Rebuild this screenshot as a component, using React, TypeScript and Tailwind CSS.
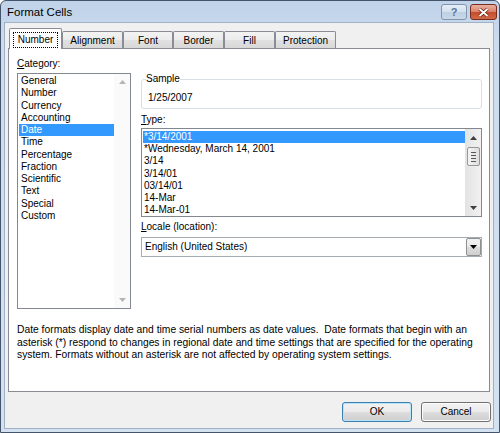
import React from 'react';

const categories = [
    'General',
    'Number',
    'Currency',
    'Accounting',
    'Date',
    'Time',
    'Percentage',
    'Fraction',
    'Scientific',
    'Text',
    'Special',
    'Custom',
];

const types = [
    '*3/14/2001',
    '*Wednesday, March 14, 2001',
    '3/14',
    '3/14/01',
    '03/14/01',
    '14-Mar',
    '14-Mar-01',
];

const tabs = [
    { name: 'Number', width: 'w-[53px]' },
    { name: 'Alignment', width: 'w-[61px]' },
    { name: 'Font', width: 'w-[50px]' },
    { name: 'Border', width: 'w-[51px]' },
    { name: 'Fill', width: 'w-[51px]' },
    { name: 'Protection', width: 'w-[61px]' },
];

function Arrow({ dir, color }: { dir: 'up' | 'down'; color: string }) {
    return (
        <svg width="7" height="4" viewBox="0 0 7 4">
            <path d={dir === 'up' ? 'M0 4 L3.5 0 L7 4 Z' : 'M0 0 L7 0 L3.5 4 Z'} fill={color} />
        </svg>
    );
}

function TitleBar() {
    return (
        <div className="h-[21px] flex items-start justify-between">
            <span className="pl-[6px] pt-[5px] text-[11.5px] leading-[12px] text-black">Format Cells</span>
            <div className="flex gap-[3px] pt-[3px] pr-[2px]">
                {/* HELP */}
                <div className="w-[26px] h-[16px] rounded-[3px] border border-[#7f95ae] bg-[linear-gradient(#e6eef7_0%,#d3e0ee_50%,#bccfe4_50%,#c9d9ea_100%)] flex items-center justify-center">
                    <span className="text-[11px] leading-[11px] font-bold text-[#5a7597]">?</span>
                </div>
                {/* CLOSE */}
                <div className="w-[27px] h-[16px] rounded-[3px] border border-[#7a2b1b] bg-[linear-gradient(#eab0a1_0%,#d9826c_50%,#c64a2a_50%,#d16a45_100%)] flex items-center justify-center">
                    <svg width="11" height="9" viewBox="0 0 11 9">
                        <path d="M1.5 1 L9.5 8 M9.5 1 L1.5 8" stroke="#6b2215" strokeWidth="3.4" />
                        <path d="M1.5 1 L9.5 8 M9.5 1 L1.5 8" stroke="#ffffff" strokeWidth="1.8" />
                    </svg>
                </div>
            </div>
        </div>
    );
}

function Tabs() {
    return (
        <div className="flex items-end pl-[4px] mt-[5px] relative z-10">
            {tabs.map((tab, idx) =>
                idx === 0 ? (
                    <div
                        key={tab.name}
                        className={`${tab.width} h-[21px] -mb-px bg-white border border-b-0 border-[#898c95] rounded-t-[2px] flex justify-center pt-[3px]`}
                    >
                        <span className="h-[16px] px-[4px] border border-dotted border-black leading-[14px]">
                            {tab.name}
                        </span>
                    </div>
                ) : (
                    <div
                        key={tab.name}
                        className={`${tab.width} h-[17px] border border-b-0 border-[#898c95] rounded-t-[2px] bg-[linear-gradient(#f3f3f3_0%,#ebebeb_50%,#e1e1e1_50%,#d8d8d8_100%)] flex justify-center pt-[3px] leading-[12px]`}
                    >
                        {tab.name}
                    </div>
                )
            )}
        </div>
    );
}

function CategoryList() {
    return (
        <div className="h-[236px] border border-[#828790] bg-white flex">
            <div className="flex-1 pt-[1px]">
                {categories.map((c) => (
                    <div
                        key={c}
                        className={`h-[12.25px] leading-[12.25px] ml-[1px] pl-[2px] ${c === 'Date' ? 'bg-[#3399ff] text-white' : ''}`}
                    >
                        {c}
                    </div>
                ))}
            </div>
            {/* DISABLED SCROLLBAR */}
            <div className="w-[16px] bg-[#fafafa] flex flex-col items-center justify-between py-[6px]">
                <Arrow dir="up" color="#b5b5b5" />
                <Arrow dir="down" color="#b5b5b5" />
            </div>
        </div>
    );
}

function TypeList() {
    return (
        <div className="h-[89px] border border-[#828790] bg-white flex overflow-hidden">
            <div className="flex-1 pt-[2px] overflow-hidden">
                {types.map((t, idx) => (
                    <div
                        key={t}
                        className={`h-[12.2px] leading-[12.2px] ml-[1px] pl-[1px] whitespace-nowrap ${idx === 0 ? 'bg-[#3399ff] text-white' : ''}`}
                    >
                        {t}
                    </div>
                ))}
            </div>
            {/* SCROLLBAR */}
            <div className="w-[16px] bg-[linear-gradient(90deg,#e3e3e3,#f1f1f1)] flex flex-col items-center">
                <div className="h-[18px] flex items-center justify-center">
                    <Arrow dir="up" color="#3f3f3f" />
                </div>
                <div className="w-[13px] h-[19px] rounded-[2px] border border-[#979797] bg-[linear-gradient(90deg,#f4f4f4,#dedede)] flex flex-col items-center justify-center gap-[2px]">
                    <div className="w-[5px] h-px bg-[#555]" />
                    <div className="w-[5px] h-px bg-[#555]" />
                    <div className="w-[5px] h-px bg-[#555]" />
                    <div className="w-[5px] h-px bg-[#555]" />
                </div>
                <div className="flex-1" />
                <div className="h-[16px] flex items-center justify-center">
                    <Arrow dir="down" color="#3f3f3f" />
                </div>
            </div>
        </div>
    );
}

function LocaleSelect() {
    return (
        <div className="h-[20px] border border-[#a5acb5] bg-white flex items-center">
            <span className="flex-1 pl-[3px] leading-[12px]">English (United States)</span>
            <div className="w-[15px] h-[18px] border border-[#8e8f8f] rounded-[2px] bg-[linear-gradient(#f2f2f2_0%,#ebebeb_50%,#dddddd_50%,#cfcfcf_100%)] flex items-center justify-center">
                <Arrow dir="down" color="#000" />
            </div>
        </div>
    );
}

export default function App() {
    return (
        <div className="w-[500px] h-[433px] font-['Liberation_Sans',Arial,sans-serif] text-[10px] text-black">
            <div className="h-full flex flex-col rounded-t-[6px] border border-[#44546a] bg-[linear-gradient(#bfd2e9,#cddcee_10%,#d3e1f0)]">
                <TitleBar />

                {/* DIALOG BODY */}
                <div className="flex-1 ml-[3px] mr-[5px] mb-[3px] border border-[#9fb1c6] bg-[#f0f0f0] flex flex-col">
                    <Tabs />

                    {/* TAB PANEL */}
                    <section className="ml-[3px] w-[482px] h-[344px] border border-[#898c95] bg-white pl-[8px] pt-[9px]">
                        <div className="flex">
                            {/* CATEGORY */}
                            <div className="w-[114px] flex flex-col">
                                <div className="leading-[12px] mb-[3px]">
                                    <u>C</u>ategory:
                                </div>
                                <CategoryList />
                            </div>

                            <div className="ml-[10px] w-[341px] flex flex-col -mt-[9px] pt-[24px]">
                                {/* SAMPLE */}
                                <fieldset className="border border-[#d5dfe5] rounded-[3px] pl-[4px] pb-[4px]">
                                    <legend className="leading-[12px] px-0">Sample</legend>
                                    <div className="pt-[7px] pl-[2px] leading-[12px]">1/25/2007</div>
                                </fieldset>

                                {/* TYPE */}
                                <div className="leading-[12px] mt-[5px] mb-[2px]">
                                    <u>T</u>ype:
                                </div>
                                <TypeList />

                                {/* LOCALE */}
                                <div className="leading-[12px] mt-[4px] mb-[4px]">
                                    <u>L</u>ocale (location):
                                </div>
                                <LocaleSelect />
                            </div>
                        </div>

                        <p className="mt-[15px] text-[10.3px] leading-[12.5px] whitespace-pre">
                            {'Date formats display date and time serial numbers as date values.  Date formats that begin with an\nasterisk (*) respond to changes in regional date and time settings that are specified for the operating\nsystem. Formats without an asterisk are not affected by operating system settings.'}
                        </p>
                    </section>

                    {/* BUTTONS */}
                    <div className="mt-[10px] ml-[337px] flex gap-[9px]">
                        <button className="w-[70px] h-[20px] rounded-[3px] border border-[#3c7fb1] shadow-[inset_0_0_0_1px_#b9e3f8] bg-[linear-gradient(#f2f2f2_0%,#ebebeb_50%,#dddddd_50%,#cfcfcf_100%)] leading-[12px]">
                            OK
                        </button>
                        <button className="w-[70px] h-[20px] rounded-[3px] border border-[#707070] shadow-[inset_0_0_0_1px_#fcfcfc] bg-[linear-gradient(#f2f2f2_0%,#ebebeb_50%,#dddddd_50%,#cfcfcf_100%)] leading-[12px]">
                            Cancel
                        </button>
                    </div>
                </div>
            </div>
        </div>
    );
}
